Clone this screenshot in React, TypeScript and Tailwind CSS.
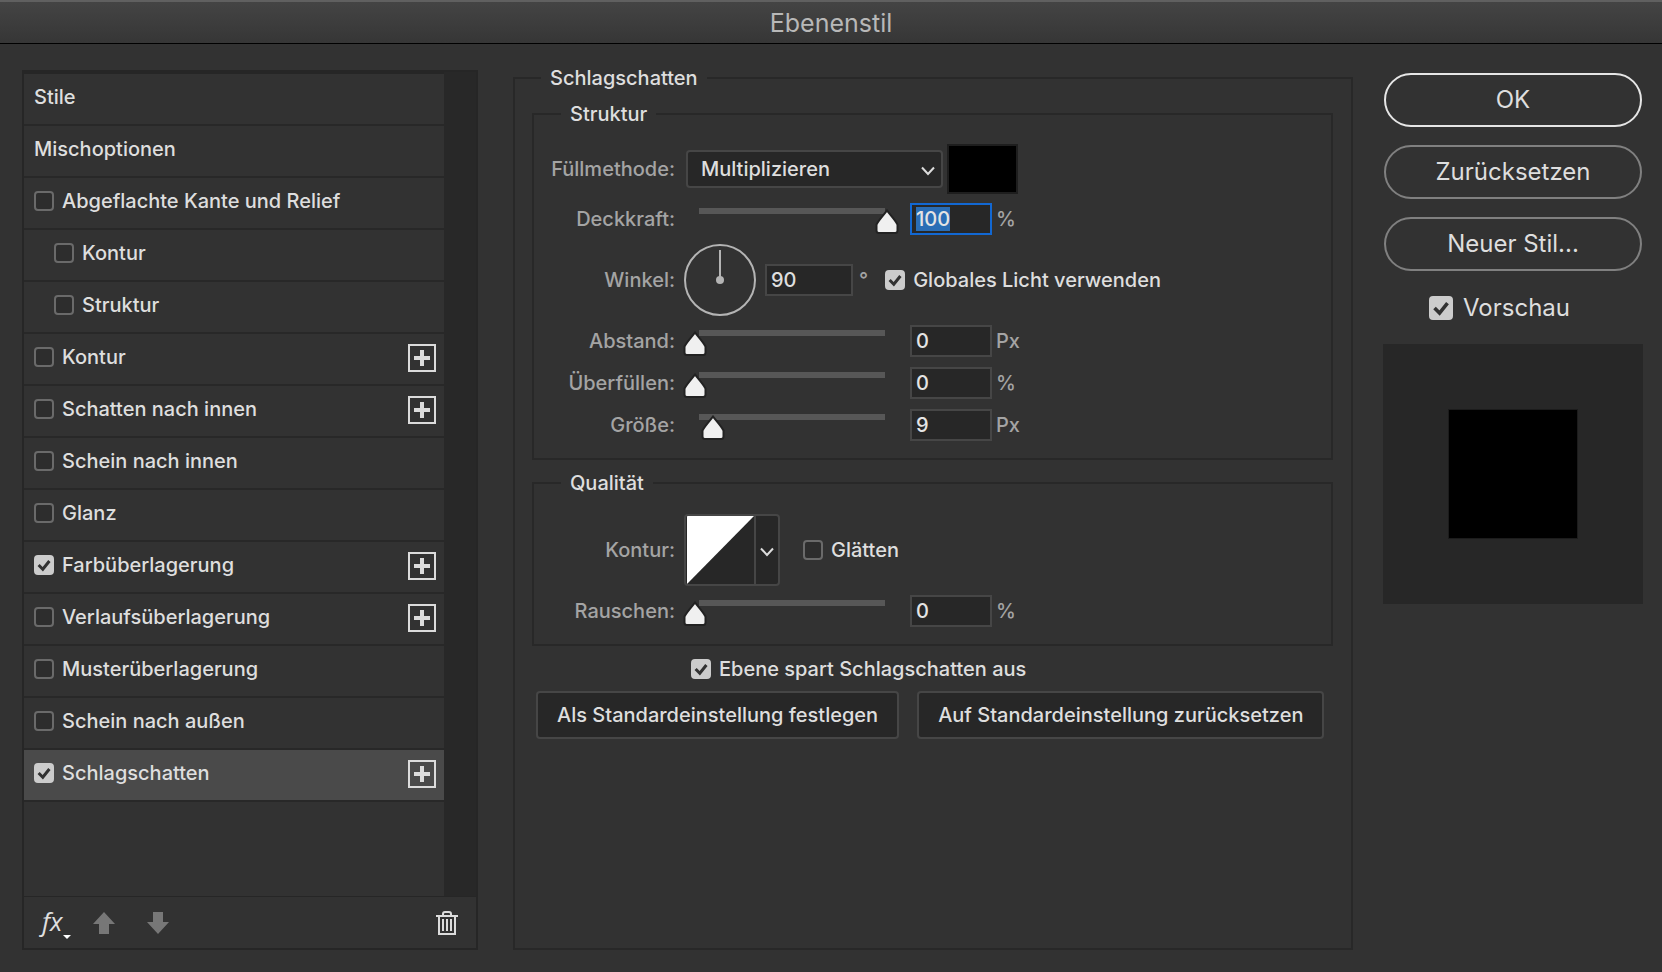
import { useEffect, useRef, useState } from "react";
import type { ReactNode } from "react";
import clsx from "clsx";

type Effect = {
  id: string;
  label: string;
  checked?: boolean;
  nested?: boolean;
  addable?: boolean;
  selected?: boolean;
};

const effects: Effect[] = [
  { id: "bevel", label: "Abgeflachte Kante und Relief" },
  { id: "bevel-contour", label: "Kontur", nested: true },
  { id: "bevel-texture", label: "Struktur", nested: true },
  { id: "stroke", label: "Kontur", addable: true },
  { id: "inner-shadow", label: "Schatten nach innen", addable: true },
  { id: "inner-glow", label: "Schein nach innen" },
  { id: "satin", label: "Glanz" },
  { id: "color-overlay", label: "Farbüberlagerung", checked: true, addable: true },
  { id: "gradient-overlay", label: "Verlaufsüberlagerung", addable: true },
  { id: "pattern-overlay", label: "Musterüberlagerung" },
  { id: "outer-glow", label: "Schein nach außen" },
  { id: "drop-shadow", label: "Schlagschatten", checked: true, addable: true, selected: true },
];

function Checkbox({ id, checked = false, large = false }: { id: string; checked?: boolean; large?: boolean }) {
  return (
    <span className={clsx("relative block shrink-0", large ? "size-6" : "size-5")}>
      <input
        id={id}
        type="checkbox"
        defaultChecked={checked}
        className="peer block size-full appearance-none rounded border-2 border-[#6a6a6a] bg-[#2d2d2d] checked:border-[#cccccc] checked:bg-[#cccccc]"
      />
      <svg
        viewBox="0 0 20 20"
        className="pointer-events-none absolute inset-0 hidden size-full fill-none stroke-[#323232] stroke-[3] peer-checked:block"
      >
        <path d="M4.600 10 8.800 14.200 15.400 6" />
      </svg>
    </span>
  );
}

function PlusButton({ label }: { label: string }) {
  return (
    <button
      aria-label={`${label} hinzufügen`}
      className="mb-0.5 flex size-7 shrink-0 items-center justify-center border-2 border-[#dcdcdc]"
    >
      <svg viewBox="0 0 16 16" className="size-4 fill-[#dcdcdc]">
        <path d="M6 0h4v6h6v4h-6v6H6v-6H0V6h6z" />
      </svg>
    </button>
  );
}

function Chevron({ className }: { className?: string }) {
  return (
    <svg viewBox="0 0 14 10" className={clsx("h-2.5 w-3.5 fill-none stroke-[#dcdcdc] stroke-2", className)}>
      <path d="M1 1.5 7 8l6-6.5" />
    </svg>
  );
}

function Row({ label, htmlFor, children, wide = false }: { label: string; htmlFor: string; children: ReactNode; wide?: boolean }) {
  return (
    <div className={clsx("flex items-center", wide ? "gap-[11px]" : "gap-[9px]")}>
      <label htmlFor={htmlFor} className="w-[141px] shrink-0 text-right text-[#a4a4a4]">
        {label}
      </label>
      {children}
    </div>
  );
}

function SliderRow({
  id,
  label,
  unit,
  initial,
  max,
  focused = false,
}: {
  id: string;
  label: string;
  unit: string;
  initial: number;
  max: number;
  focused?: boolean;
}) {
  const [value, setValue] = useState(initial);
  const input = useRef<HTMLInputElement>(null);

  useEffect(() => {
    if (focused) {
      input.current?.focus();
      input.current?.select();
    }
  }, [focused]);

  return (
    <Row label={label} htmlFor={id}>
      <div className="relative h-8 w-[214px] px-[11px]">
        <div className="pt-[5px] pr-0.5 pl-1">
          <div className="h-1.5 bg-[#575757]" />
        </div>
        <div className="pointer-events-none absolute inset-x-[11px] top-1.5">
          <svg
            viewBox="0 0 24 26"
            className="absolute h-[26px] w-6 -translate-x-1/2 fill-[#f0f0f0] stroke-[#222222] stroke-2"
            style={{ left: `${(value / max) * 100}%` }}
          >
            <path d="M12 1.5C13.5 3.5 21 12 22.5 15.500V21.500Q22.500 24 20 24H4Q1.500 24 1.500 21.500V15.500C3 12 10.500 3.500 12 1.500Z" />
          </svg>
        </div>
        <input
          type="range"
          aria-label={label}
          min={0}
          max={max}
          value={value}
          onChange={(e) => setValue(Number(e.target.value))}
          className="absolute inset-0 size-full opacity-0"
        />
      </div>
      <div className="ml-[3px] flex items-center gap-1">
        <input
          id={id}
          ref={input}
          value={value}
          onChange={(e) => setValue(Math.min(max, Number(e.target.value) || 0))}
          className="h-8 w-[82px] border-2 border-[#464646] bg-[#272727] px-1 text-[#e4e4e4] outline-none selection:bg-[#2a6db5] selection:text-[#e4e4e4] focus:border-[#1268d3]"
        />
        <span className="text-[#a4a4a4]">{unit}</span>
      </div>
    </Row>
  );
}

function EffectRow({ effect }: { effect: Effect }) {
  return (
    <li
      className={clsx(
        "flex h-[52px] items-center border-b-2 border-[#282828] pr-2",
        effect.nested ? "pl-[30px]" : "pl-2.5",
        effect.selected && "bg-[#4a4a4a]"
      )}
    >
      <div className="flex flex-1 items-center gap-2 pb-1">
        <Checkbox id={effect.id} checked={effect.checked} />
        <label htmlFor={effect.id}>{effect.label}</label>
      </div>
      {effect.addable && <PlusButton label={effect.label} />}
    </li>
  );
}

function StyleList() {
  return (
    <aside className="mt-1 flex w-[456px] shrink-0 flex-col border-2 border-[#262626]">
      <div className="flex flex-1">
        <ul className="w-[420px] border-t-2 border-[#262626]">
          <li className="flex h-[52px] items-center border-b-2 border-[#282828] px-2.5 pb-1">Stile</li>
          <li className="flex h-[52px] items-center border-b-2 border-[#282828] px-2.5 pb-1">Mischoptionen</li>
          {effects.map((effect) => (
            <EffectRow key={effect.id} effect={effect} />
          ))}
        </ul>
        <div className="flex-1 bg-[#282828]" />
      </div>
      <div className="flex h-[52px] items-center border-t border-[#262626] px-[18px]">
        <button aria-label="Effekte" className="flex h-8 items-end">
          <span className="pb-0.5 font-['Open_Sans'] text-[26px] leading-8 font-normal italic">fx</span>
          <svg viewBox="0 0 8 4" className="h-1 w-2 fill-white">
            <path d="M0 0h8L4 4z" />
          </svg>
        </button>
        <button aria-label="Nach oben" className="ml-[22px]">
          <svg viewBox="0 0 22 22" className="size-[22px] fill-[#777777]">
            <path d="M11 0 22 12h-6v10H6V12H0z" />
          </svg>
        </button>
        <button aria-label="Nach unten" className="ml-8">
          <svg viewBox="0 0 22 22" className="size-[22px] fill-[#777777]">
            <path d="M6 0h10v10h6L11 22 0 10h6z" />
          </svg>
        </button>
        <button aria-label="Löschen" className="ml-auto">
          <svg viewBox="0 0 22 24" className="h-6 w-[22px] fill-none stroke-[#dcdcdc] stroke-2">
            <path d="M0 5h22M7 4V3q0-2 2-2h4q2 0 2 2v1M3 5v18h16V5M7 8v12M11 8v12M15 8v12" />
          </svg>
        </button>
      </div>
    </aside>
  );
}

function Group({ title, children }: { title: string; children: ReactNode }) {
  return (
    <fieldset className="border-2 border-[#282828] pb-[17px]">
      <legend className="ml-[27px] px-[9px]">{title}</legend>
      {children}
    </fieldset>
  );
}

function ShadowSettings() {
  return (
    <fieldset className="min-w-0 flex-1 border-2 border-[#282828] pr-[18px] pl-[17px]">
      <legend className="ml-[9px] px-[9px]">Schlagschatten</legend>
      <div className="flex flex-col gap-[11px] pt-3">
        <Group title="Struktur">
          <div className="flex flex-col gap-[9px] pt-[18px]">
            <Row label="Füllmethode:" htmlFor="blend-mode" wide>
              <div className="flex items-center gap-1">
                <div className="relative">
                  <select
                    id="blend-mode"
                    className="block h-[38px] w-[257px] appearance-none rounded border-2 border-[#464646] bg-[#272727] px-[13px]"
                  >
                    <option>Multiplizieren</option>
                    <option>Normal</option>
                  </select>
                  <Chevron className="pointer-events-none absolute top-4 right-2" />
                </div>
                <button aria-label="Schattenfarbe" className="h-[50px] w-[71px] border-2 border-[#1e1e1e] bg-black" />
              </div>
            </Row>
            <SliderRow id="opacity" label="Deckkraft:" unit="%" initial={100} max={100} focused />
            <Row label="Winkel:" htmlFor="angle">
              <svg viewBox="0 0 72 72" className="size-[72px] fill-none stroke-[#b4b4b4] stroke-2">
                <circle cx="36" cy="36" r="35" />
                <path d="M36 6v30" />
                <circle cx="36" cy="36" r="4" className="fill-[#b4b4b4] stroke-none" />
              </svg>
              <div className="flex items-center gap-1.5">
                <input
                  id="angle"
                  defaultValue="90"
                  className="h-8 w-[88px] border-2 border-[#464646] bg-[#272727] px-1 outline-none"
                />
                <span className="text-[#a4a4a4]">°</span>
              </div>
              <div className="ml-2 flex items-center gap-2">
                <Checkbox id="global-light" checked />
                <label htmlFor="global-light">Globales Licht verwenden</label>
              </div>
            </Row>
            <div className="flex flex-col gap-2.5">
              <SliderRow id="distance" label="Abstand:" unit="Px" initial={0} max={100} />
              <SliderRow id="spread" label="Überfüllen:" unit="%" initial={0} max={100} />
              <SliderRow id="size" label="Größe:" unit="Px" initial={9} max={96} />
            </div>
          </div>
        </Group>
        <Group title="Qualität">
          <div className="flex flex-col gap-[9px] pt-[19px]">
            <Row label="Kontur:" htmlFor="contour">
              <button
                id="contour"
                className="flex h-[72px] w-24 items-stretch overflow-hidden rounded border-2 border-[#464646] bg-[#272727]"
              >
                <svg viewBox="0 0 68 68" className="h-[68px] w-[68px] fill-white">
                  <path d="M1 0h67L1 68z" />
                </svg>
                <span className="flex flex-1 items-center justify-center border-l-2 border-[#464646] pt-1">
                  <Chevron />
                </span>
              </button>
              <div className="ml-3.5 flex items-center gap-2">
                <Checkbox id="anti-alias" />
                <label htmlFor="anti-alias">Glätten</label>
              </div>
            </Row>
            <SliderRow id="noise" label="Rauschen:" unit="%" initial={0} max={100} />
          </div>
        </Group>
        <div className="flex items-center gap-2 pl-[159px]">
          <Checkbox id="knockout" checked />
          <label htmlFor="knockout">Ebene spart Schlagschatten aus</label>
        </div>
      </div>
      <div className="flex gap-[18px] px-1 pt-2.5">
        <button className="h-12 rounded border-2 border-[#464646] bg-[#272727] px-[19px]">
          Als Standardeinstellung festlegen
        </button>
        <button className="h-12 rounded border-2 border-[#464646] bg-[#272727] px-[19px]">
          Auf Standardeinstellung zurücksetzen
        </button>
      </div>
    </fieldset>
  );
}

function Actions() {
  return (
    <div className="mt-[7px] ml-[30px] flex w-[260px] shrink-0 flex-col text-2xl font-normal">
      <div className="flex flex-col gap-[18px] px-px">
        <button className="h-[54px] rounded-full border-2 border-[#e6e6e6]">OK</button>
        <button className="h-[54px] rounded-full border-2 border-[#808080]">Zurücksetzen</button>
        <button className="h-[54px] rounded-full border-2 border-[#808080]">Neuer Stil...</button>
      </div>
      <div className="mt-[21px] flex items-center gap-2.5 pl-[46px]">
        <Checkbox id="preview" checked large />
        <label htmlFor="preview">Vorschau</label>
      </div>
      <div className="mt-5 flex h-[260px] items-center justify-center bg-[#272727]">
        <div className="size-[130px] border border-[#1c1c1c] bg-black" />
      </div>
    </div>
  );
}

export default function App() {
  return (
    <div className="flex min-h-screen flex-col bg-[#323232] font-['Inter',sans-serif] text-[20px] leading-6 font-medium text-[#dedede]">
      <header className="flex h-11 items-center justify-center border-t-2 border-b border-t-[#606060] border-b-black bg-linear-to-b from-[#444444] to-[#363636]">
        <h1 className="text-[25px] font-normal text-[#b8b8b8]">Ebenenstil</h1>
      </header>
      <main className="flex flex-1 pt-[22px] pr-[19px] pb-[22px] pl-[22px]">
        <StyleList />
        <div className="w-[35px] shrink-0" />
        <ShadowSettings />
        <Actions />
      </main>
    </div>
  );
}
